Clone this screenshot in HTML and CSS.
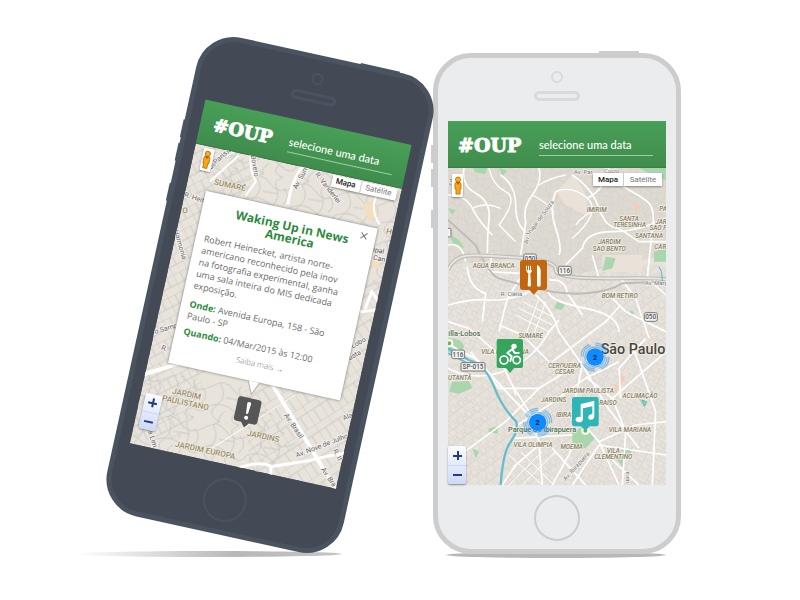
FILE: index.html
```html
<!DOCTYPE html>
<html lang="pt-BR">
<head>
<meta charset="utf-8">
<title>#OUP</title>
<link rel="stylesheet" href="styles.css">
</head>
<body>
<svg class="defs" aria-hidden="true">
  <defs>
    <symbol id="pegman" viewBox="0 0 10 20">
      <path d="M2 8Q2 6 5 6T8 8V13H7V18H3V13H2Z" fill="#f5a914" stroke="#c9780c" stroke-width="1"/>
      <circle cx="5" cy="3.500" r="2.500" fill="#f8b31c" stroke="#c9780c"/>
      <path d="M3 6H7L5 9Z" fill="#d2451e"/>
    </symbol>
    <pattern id="grid-a" width="36" height="27" patternUnits="userSpaceOnUse" patternTransform="rotate(28)">
      <path d="M0 0H36M0 14H22M22 0V27M9 14V27M31 0V14" fill="none" class="minor"/>
    </pattern>
    <pattern id="grid-b" width="30" height="38" patternUnits="userSpaceOnUse" patternTransform="rotate(-36)">
      <path d="M0 0H30M0 20H30M0 0V38M15 0V20M22 20V38M0 10H15" fill="none" class="minor"/>
    </pattern>
    <pattern id="curves" width="74" height="68" patternUnits="userSpaceOnUse" patternTransform="rotate(12)">
      <path d="M0 10Q20 0 37 12T74 10M0 42Q16 30 30 44T56 40T74 42M12 5Q22 24 10 38T18 68M18 0Q14 3 12 5M44 14Q56 28 46 42T50 68M50 0Q44 6 44 14M62 8Q74 24 64 40M30 44Q26 60 36 68M36 0Q34 4 37 12M0 58H14M50 58Q62 50 74 58M24 24H46" fill="none" class="minor"/>
    </pattern>
    <pattern id="blocks-a" width="18" height="15" patternUnits="userSpaceOnUse" patternTransform="rotate(63)">
      <path d="M0 0H18M0 8H10M0 0V15M10 0V15" fill="none" class="street"/>
    </pattern>
    <pattern id="blocks-b" width="16" height="22" patternUnits="userSpaceOnUse" patternTransform="rotate(-33)">
      <path d="M0 0H16M0 8H16M0 0V22M8 8V22" fill="none" class="street"/>
    </pattern>
    <pattern id="bends" width="46" height="42" patternUnits="userSpaceOnUse" patternTransform="rotate(10)">
      <path d="M0 8Q12 -3 22 8T46 8M8 4Q18 16 8 26T14 42M28 9Q36 20 28 30T34 42M0 28Q14 20 28 30T46 28M14 42Q10 38 18 30M36 10Q46 18 38 27M14 0Q8 2 8 4M34 0Q26 4 28 9M16 17H31" fill="none" class="street"/>
    </pattern>
  </defs>
</svg>

<main class="stage">
  <section class="phone phone-dark" aria-label="Detalhe do evento">
    <i class="key key-top"></i><i class="key key-mute"></i><i class="key key-up"></i><i class="key key-down"></i>
    <div class="bezel"><i class="camera"></i><i class="speaker"></i></div>
    <div class="screen">
      <header class="bar">
        <h1 class="logo">#OUP</h1>
        <input class="date" type="text" aria-label="Data" value="selecione uma data">
      </header>
      <div class="map">
        <svg class="tiles" viewBox="0 0 211 307" preserveAspectRatio="xMidYMid slice">
          <rect width="211" height="307" fill="#e8e4dc"/>
          <g transform="rotate(-12.4) translate(-196 -144)">
            <path d="M120 130L250 160L250 260L180 440L90 440Z" fill="url(#blocks-a)"/>
            <path d="M200 130H420V290H250Z" fill="url(#bends)"/>
            <path d="M150 372L240 385L300 440L260 480L120 460Z" fill="url(#bends)"/>
            <path d="M245 390L270 385L360 280H420V520H300L250 470Z" fill="url(#blocks-b)"/>
            <path d="M362 206L374 200L378 216L370 222Z M372 258l8 2v8h-8z" fill="#f3dfc0"/>
            <g class="roads" stroke-width="3">
              <path d="M308 160Q292 178 288 205"/>
              <path d="M140 376Q168 368 195 358" stroke-width="4"/>
              <path d="M268 378Q300 430 336 490" stroke-width="4"/>
              <path d="M356 452Q332 455 310 461L272 467Q260 460 236 470M271 467V480"/>
              <path d="M251 150Q249 170 256 182L246 196M239 156L210 182M380 190Q368 208 380 225" stroke-width="2"/>
              <path d="M365 310L372 292L382 308Q372 312 360 312"/>
              <path d="M296 395L210 450M238 150L200 174M139 380V405" stroke-width="1"/>
            </g>
            <g class="names">
              <text transform="translate(208 173) rotate(-42)">Rua Cayowaá</text>
              <text transform="translate(216 165) rotate(-42)">Paris</text>
              <text transform="translate(251 156) rotate(80)">Bovero</text>
              <text transform="translate(297 190) rotate(-62)">Av. Suma</text>
              <text transform="translate(315 175) rotate(52)">R. Vanderlei</text>
              <text transform="translate(184 197) rotate(18)">R. Heitor</text>
              <text transform="translate(174 231) rotate(74)">Harmonia</text>
              <text transform="translate(153 335) rotate(-16)">ro Samp</text>
              <text transform="translate(161 350) rotate(20)">R.</text>
              <text transform="translate(353 349) rotate(-30)">Lobo</text>
              <text transform="translate(350 361) rotate(-30)">usta</text>
              <text transform="translate(284 416) rotate(56)">Av. Brasil</text>
              <text transform="translate(297 458) rotate(-21)">Av. Nove de Julho</text>
              <text transform="translate(321 470) rotate(56)">Av. Bra</text>
              <text transform="translate(344 421) rotate(-22)">Ala</text>
              <text transform="translate(333 451) rotate(62)">R. It</text>
              <text transform="translate(148 432) rotate(72)">a Lim</text>
              <text class="poi" transform="translate(373 252) rotate(12)">ipal</text>
              <text class="poi" transform="translate(373 260) rotate(12)">Can</text>
            </g>
            <g class="areas">
              <text transform="translate(214 185) rotate(12)">SUMARÉ</text>
              <text transform="translate(172 394) rotate(12)">JARDIM</text>
              <text transform="translate(162 401) rotate(12)">PAULISTANO</text>
              <text transform="translate(247 436) rotate(12)">JARDINS</text>
              <text transform="translate(175 447) rotate(12)">JARDIM EUROPA</text>
              <text transform="translate(182 213) rotate(12)">O</text>
              <text transform="translate(386 234) rotate(12)">H</text>
            </g>
          </g>
          <g transform="translate(96 237)">
            <path d="M3 0H21Q24 0 24 3V22Q24 25 21 25H16L12 30L8 25H3Q0 25 0 22V3Q0 0 3 0Z" fill="#565656"/>
            <path d="M10 5Q12 3 14 5L13 16H11Z" fill="#fff"/><circle cx="12" cy="20" r="2" fill="#fff"/>
          </g>
        </svg>
        <button class="peg" aria-label="Street View"><svg><use href="#pegman"/></svg></button>
        <div class="types"><button class="on">Mapa</button><button>Satélite</button></div>
        <div class="zoom"><button aria-label="Aproximar"><i class="plus"></i></button><button aria-label="Afastar"><i class="minus"></i></button></div>
        <article class="popup">
          <button class="close" aria-label="Fechar"><svg viewBox="0 0 8 8"><path d="M1 1L7 7M7 1L1 7"/></svg></button>
          <h2>Waking Up in News<br>America</h2>
          <p class="about">Robert Heinecket, artista norte-<br>americano reconhecido pela inov<br>na fotografia experimental, ganha<br>uma sala inteira do MIS dedicada<br>exposição.</p>
          <p class="where"><b>Onde:</b> Avenida Europa, 158 - São<br>Paulo - SP</p>
          <p class="when"><b>Quando:</b> 04/Mar/2015 às 12:00</p>
          <a class="more" href="#">Saiba mais →</a>
          <svg class="tail" viewBox="0 0 14 14"><path d="M1 0L7 13L13 0"/></svg>
        </article>
      </div>
    </div>
    <button class="home" aria-label="Início"></button>
  </section>

  <section class="phone phone-light" aria-label="Mapa de eventos">
    <i class="key key-top"></i><i class="key key-mute"></i><i class="key key-up"></i><i class="key key-down"></i>
    <div class="bezel"><i class="camera"></i><i class="speaker"></i></div>
    <div class="screen">
      <header class="bar">
        <h1 class="logo">#OUP</h1>
        <input class="date" type="text" aria-label="Data" value="selecione uma data">
      </header>
      <div class="map">
        <svg class="tiles city" viewBox="27 9 654 951" preserveAspectRatio="xMidYMid slice">
          <rect x="0" width="700" height="970" fill="#e7e3dc"/>
          <path d="M27 0H681V270L400 330L240 280L27 300Z" fill="#dedad1"/>
          <path d="M27 0H681V270L400 330L240 280L27 300Z" fill="url(#curves)"/>
          <path d="M27 300L330 300L260 560L27 560Z" fill="url(#grid-a)"/>
          <path d="M330 300H681V560L440 620L250 560Z" fill="url(#grid-b)"/>
          <path d="M27 600L260 560L480 620L400 960H27Z" fill="url(#grid-b)"/>
          <path d="M440 620L681 540V960H400Z" fill="url(#grid-a)"/>
          <path d="M400 30Q460 90 440 150L380 120L350 80Z M490 270H610V320H490Z" fill="#eae2d8"/>
          <g fill="#a9d6ac">
            <path d="M102 9H145L138 28L110 22Z M182 9L205 18L190 34Z M600 9H681V45L640 30Z M29 205L60 225L75 250L45 240Z M500 275L530 280L520 310L490 318Z M645 260L681 250V290H645Z M355 410L378 420L368 436L345 430Z M570 435L585 440L580 455Z M27 520Q70 520 75 545L60 580L27 560Z M40 650L90 648L100 670L60 686L30 680Z M150 790L180 784L175 806L148 800Z M400 800L440 784L468 820L440 850L400 838Z M545 855L580 850L570 880Z M598 700L625 710L616 728Z M530 880L560 870L550 905Z M100 850L120 860L110 880Z M27 130L50 135L40 150Z"/>
          </g>
          <g fill="#f3cdb4"><path d="M585 115L605 122L600 136L588 130Z M345 90L360 88L358 104Z M535 630L560 635L545 665Z M525 655L540 664L530 690Z"/></g>
          <g class="roads" stroke-width="5">
            <path d="M75 9Q65 60 110 85T150 160T145 265M185 30Q230 60 230 120T260 200M300 9Q310 50 280 90T260 170L245 270M350 80Q330 130 350 190T360 270M445 100Q500 70 510 9M500 9Q540 60 570 75T625 110T640 190M400 30Q460 70 480 130T540 190L600 230M681 160Q600 200 520 200T430 250L380 300M27 90Q80 90 100 130T160 210M27 240Q70 230 80 290M600 230H681M460 270L480 340M500 380L560 440L681 500M640 190L625 340L681 390M545 340L590 400L630 520"/>
            <path d="M350 80Q400 60 445 100T400 220M150 9Q160 60 200 80T180 180L230 230M300 60Q330 40 380 30M100 130Q140 110 185 130M480 130Q430 150 410 180M280 90Q320 110 345 140" stroke-width="4"/>
            <path d="M27 420Q100 400 150 405T260 385T330 385T440 430T540 500M160 265L150 320L243 325M85 305Q90 370 140 385L130 470M243 340L205 400L180 500M330 345Q380 340 385 385L430 450M290 390Q340 430 360 500L430 600L500 720L600 850M27 470L90 490L170 560L220 660L230 690M180 480L250 510L330 590M340 590L500 470L545 420M430 600L470 560L540 560"/>
            <path d="M27 610Q100 650 190 620T330 500L360 465M220 660L270 740L300 830L310 960M95 560L180 670L300 670L430 590M220 790L330 720L440 640L540 590M300 670L200 770L50 880M430 600L400 740L480 830L540 960M480 830L590 780L681 770M440 635L520 700L681 560M520 700L560 800L550 960M220 820L400 810M300 840L230 900L190 960M620 520L540 610L545 700M580 540L650 740L640 960M400 850L340 960M340 850L440 960M480 840L400 960M480 840L681 870M520 885L600 960"/>
            <path d="M230 450L330 500M240 430L340 480M250 410L350 460M260 510L300 400M280 520L320 410" stroke-width="3"/>
            <path d="M210 870L310 960M245 860L345 960M310 860L210 960M350 860L250 960" stroke-width="3"/>
            <path d="M27 535L65 560L110 580L220 700L270 750" stroke-width="6"/>
          </g>
          <path class="rail" d="M27 165L110 240Q150 330 180 340T290 370T440 385T550 355L681 350" stroke-width="6"/>
          <path class="rail" d="M27 315Q45 275 85 272T240 278T350 315T540 340T681 355" stroke-width="12"/>
          <path d="M27 315Q45 275 85 272T240 278T350 315T540 340T681 355" fill="none" stroke="#e9e7e3" stroke-width="5"/>
          <path d="M27 550L90 585Q140 600 165 665T232 770Q238 800 215 830T185 960" fill="none" stroke="#68bccc" stroke-width="7"/>
          <path d="M27 565L80 592" fill="none" stroke="#68bccc" stroke-width="5"/>
          <path d="M660 305L668 320L670 350M610 705l12 6-6 12z" fill="none" stroke="#50b9d0" stroke-width="3"/>
          <g class="areas mid">
            <text x="473" y="142">IMIRIM</text><text x="570" y="167">SANTA</text><text x="572" y="186">TERESINHA</text>
            <text x="630" y="218">SANTANA</text><text x="511" y="238">JARDIM</text><text x="511" y="257">SAO BENTO</text>
            <text x="666" y="176">JAR</text><text x="658" y="195">SAO P</text><text x="672" y="137">PA</text><text x="664" y="253">CAR</text>
            <text x="164" y="309">AGUA BRANCA</text><text x="542" y="398">BOM RETIRO</text>
            <text x="275" y="520">SUMARÉ</text><text x="198" y="566">VILA MADALENA</text>
            <text x="377" y="609">CERQUEIRA</text><text x="377" y="627">CÉSAR</text><text x="62" y="645">UTANTÃ</text>
            <text x="447" y="684">JARDIM PAULISTA</text><text x="344" y="711">JARDINS</text><text x="603" y="698">ACLIMAÇÃO</text>
            <text x="507" y="719">RAÍSO</text><text x="374" y="757">IBIRA</text><text x="573" y="800">VILA MARIANA</text>
            <text x="282" y="846">VILA OLIMPIA</text><text x="398" y="853">MOEMA</text><text x="523" y="864">VILA</text><text x="523" y="882">CLEMENTINO</text>
          </g>
          <g class="names">
            <text transform="translate(266 237) rotate(-75)">Av. I</text>
            <text transform="translate(275 206) rotate(-53)">najar de Souza</text>
            <text x="185" y="392">R. Clélia</text><text x="617" y="359">Av. Marg</text><text x="405" y="26">Av. Par</text><text x="495" y="24">Cucio</text>
            <text transform="translate(380 948) rotate(-48)">Av. Ibirapuera</text>
            <text transform="translate(570 955) rotate(-90)">uara</text>
            <text transform="translate(42 62) rotate(-90)">Ed.</text>
            <text class="park" x="28" y="512">illa-Lobos</text>
            <text class="park" x="207" y="802">Parque do Ibirapuera</text>
            <text class="capital" x="485" y="568">São Paulo</text>
          </g>
          <g class="shields">
            <rect x="254" y="267" width="38" height="26" rx="6"/><text x="273" y="287">050</text>
            <rect x="358" y="304" width="39" height="26" rx="6"/><text x="377" y="324">116</text>
            <rect x="616" y="443" width="39" height="26" rx="6"/><text x="635" y="463">050</text>
            <rect x="38" y="555" width="39" height="26" rx="6"/><text x="57" y="575">116</text>
            <rect x="66" y="593" width="72" height="25" rx="3"/><text x="102" y="613">SP-015</text>
            <rect x="12" y="190" width="24" height="26" rx="4"/>
          </g>
          <g fill="#76b82a" stroke="#fff" stroke-width="6"><circle cx="31" cy="535" r="9"/><circle cx="439" cy="797" r="9"/></g>
          <g transform="translate(243 285)">
            <path d="M8 0H73Q81 0 81 8V82Q81 90 73 90H54L41 104L28 90H8Q0 90 0 82V8Q0 0 8 0Z" fill="#c2670f"/>
            <path d="M18 17H21V31H24V17H27V31H30V17H33V31H36V17Q38 35 31 40L33 77Q28 82 23 77L25 40Q17 36 18 17Z" fill="#fff"/>
            <path d="M51 78V19Q51 14 56 17Q64 25 62 46V78Q57 82 51 78Z" fill="#fff"/>
          </g>
          <g transform="translate(173 522)">
            <path d="M6 0H73Q79 0 79 6V81Q79 87 73 87H52L40 102L28 87H6Q0 87 0 81V6Q0 0 6 0Z" fill="#35a45c"/>
            <g fill="none" stroke="#fff" stroke-width="5" stroke-linecap="round" stroke-linejoin="round">
              <circle cx="22" cy="63" r="12"/><circle cx="60" cy="63" r="11"/>
              <path d="M47 30L32 42L45 52L41 66M47 30L54 42L66 42" stroke-width="6"/>
            </g><circle cx="52" cy="22" r="8" fill="#fff"/>
          </g>
          <g transform="translate(399 696)">
            <path d="M7 0H73Q80 0 80 7V81Q80 88 73 88H53L40 102L27 88H7Q0 88 0 81V7Q0 0 7 0Z" fill="#2fb5b5"/>
            <path d="M26 21Q45 17 67 11V56Q67 69 54 68Q45 65 51 55Q55 50 61 52V28L33 34V65Q33 76 20 76Q7 73 12 63Q18 57 26 60Z" fill="#fff"/>
          </g>
          <g class="cluster" transform="translate(468 576)">
            <circle r="42" stroke-dasharray="46 20"/><circle r="36" stroke-dasharray="43 13.500"/><circle r="30"/><circle class="dot" r="26"/><text y="8">2</text>
          </g>
          <g class="cluster" transform="translate(296 772)">
            <circle r="42" stroke-dasharray="46 20" transform="rotate(28)"/><circle r="36" stroke-dasharray="43 13.500" transform="rotate(24)"/><circle r="30"/><circle class="dot" r="26"/><text y="8">2</text>
          </g>
        </svg>
        <button class="peg" aria-label="Street View"><svg><use href="#pegman"/></svg></button>
        <div class="types"><button class="on">Mapa</button><button>Satélite</button></div>
        <div class="zoom"><button aria-label="Aproximar"><i class="plus"></i></button><button aria-label="Afastar"><i class="minus"></i></button></div>
      </div>
    </div>
    <button class="home" aria-label="Início"></button>
  </section>
</main>
</body>
</html>
```
FILE: styles.css
```css
* { box-sizing: border-box; }
body { margin: 0; background: #fff; font-family: "Open Sans", sans-serif; }
button { margin: 0; padding: 0; border: 0; background: none; font: inherit; color: inherit; }
h1, h2, p { margin: 0; }
.defs { position: absolute; width: 0; height: 0; }

.stage {
  display: flex;
  justify-content: center;
  align-items: flex-start;
  gap: 42px;
  padding: 50px 0 40px 30px;
  overflow: hidden;
}

/* Phone shell */
.phone {
  position: relative;
  flex: none;
  display: flex;
  flex-direction: column;
  align-items: center;
  width: var(--w);
  padding-bottom: 8px;
  border: 5px solid var(--edge);
  border-radius: var(--radius);
  background: var(--body);
}
.phone-light {
  --w: 248px; --edge: #cdcdcd; --body: #ebecee; --line: #d9dadb; --ring: #cdcdcd; --radius: 38px;
  --bezel: 63px; --screen: 218px; --bar: 47px; --map: 317px; --home: 46px;
  margin-top: 3px;
}
.phone-dark {
  --w: 242px; --edge: #4a5461; --body: #434a55; --line: #4a5461; --ring: #4a5461; --radius: 38px;
  --bezel: 63px; --screen: 211px; --bar: 45px; --map: 307px; --home: 44px;
  transform: rotate(12.4deg);
  z-index: 1;
}
.phone::after {
  content: "";
  position: absolute;
  z-index: -1;
}
.phone-light::after {
  left: 8px; right: 10px; bottom: -9px; height: 6px;
  border-radius: 50%;
  background: #b8b8b8;
}
.stage::before {
  content: "";
  position: absolute;
  top: 551px;
  left: 75px;
  width: 267px;
  height: 6px;
  border-radius: 50% / 50%;
  background: linear-gradient(90deg, #fff, #b8b8b8 60%, #c4c4c4);
}
.key { position: absolute; background: var(--edge); }
.key-top { top: -7px; right: 37px; width: 40px; height: 3px; }
.key-mute, .key-up, .key-down { left: -7px; width: 3px; height: 18px; }
.key-mute { top: 87px; }
.key-up { top: 111px; }
.key-down { top: 152px; }
.phone-dark .key-mute, .phone-dark .key-up, .phone-dark .key-down { left: -6px; }
.phone-dark .key-top { top: -6px; }
.bezel {
  display: flex;
  flex-direction: column;
  align-items: center;
  gap: 8px;
  height: var(--bezel);
  padding-top: 13px;
}
.camera { width: 12px; height: 12px; border: 2px solid var(--line); border-radius: 50%; }
.speaker { width: 46px; height: 10px; border: 3px solid var(--line); border-radius: 5px; }
.home {
  width: var(--home);
  height: var(--home);
  margin-top: 10px;
  border: 2px solid var(--ring);
  border-radius: 50%;
}
.phone-dark .home { margin-top: 13px; }

/* App */
.screen { width: var(--screen); }
.bar {
  display: flex;
  align-items: center;
  gap: 17px;
  height: var(--bar);
  padding: 0 13px 0 10px;
  background: linear-gradient(#489f57, #408d4d 96%, #357a41);
}
.logo {
  flex: none;
  width: 64px;
  font: bold 19px/24px "DejaVu Serif", serif;
  color: #fff;
  -webkit-text-stroke: 1px #fff;
}
.date {
  flex: 1;
  min-width: 0;
  height: 18px;
  margin-top: 4px;
  padding: 0 0 3px;
  border: 0;
  border-bottom: 1px solid #9fcca6;
  border-radius: 0;
  background: none;
  color: #fff;
  font: 500 11px/14px Lato, sans-serif;
  outline: 0;
}
.phone-dark .bar { padding-left: 14px; gap: 17px; }
.phone-dark .logo { width: 60px; font-size: 18px; }
.map { position: relative; height: var(--map); }
.tiles { display: block; width: 100%; height: 100%; overflow: hidden; }
.minor { stroke: #d2cfc7; stroke-width: 2px; }
.street { stroke: #cccac5; stroke-width: 1px; }
.roads { fill: none; stroke: #fff; stroke-linejoin: round; }
.rail { fill: none; stroke: #bfbcb6; }
.tiles text { font-family: Roboto, sans-serif; paint-order: stroke; stroke: #f4f2ee; stroke-linejoin: round; }
.names text { font-size: 7px; fill: #666; stroke-width: 2px; }
.names .poi { fill: #555; }
.areas text { font-size: 8px; font-weight: 500; fill: #9a8b60; stroke-width: 1px; }
.city .names text { font-size: 18px; fill: #777; stroke-width: 4px; }
.city .areas text { font-size: 19px; font-style: italic; fill: #887c5c; stroke-width: 4px; }
.mid text { text-anchor: middle; }
.city .names .park { font-size: 22px; font-weight: 500; fill: #4c6f50; }
.city .names .capital { font-size: 43px; font-weight: 500; fill: #4a4638; }
.shields rect { fill: #f2f2f0; stroke: #777; stroke-width: 3px; }
.shields text { font-size: 19px; font-weight: 500; fill: #555; stroke: none; text-anchor: middle; }
.cluster circle { fill: none; stroke: #2b95f0; stroke-opacity: .5; stroke-width: 4px; }
.cluster .dot { fill: #0d8bff; stroke: none; }
.cluster text { font-size: 22px; font-weight: 700; fill: #0a2440; stroke: none; text-anchor: middle; }

/* Map controls */
.peg, .types, .zoom { position: absolute; background: #fff; box-shadow: 0 1px 2px rgba(0, 0, 0, .4); }
.peg { top: 6px; left: 4px; display: grid; place-items: center; width: 11px; height: 23px; border-radius: 1px; }
.peg svg { width: 10px; height: 20px; }
.types { top: 5px; right: 4px; display: flex; font: 8px/13px Roboto, sans-serif; color: #777; }
.types button { width: 38px; }
.types .on { width: 31px; border-right: 1px solid #ccc; font-weight: 500; color: #222; }
.zoom { bottom: 1px; left: 0; width: 18px; border-radius: 2px; background: linear-gradient(#fafbff, #cddaf8); }
.zoom button { display: grid; place-items: center; width: 100%; height: 19px; }
.zoom button + button { border-top: 1px solid #cfd6ea; }
.plus, .minus { display: block; width: 9px; height: 2px; background: #223c82; }
.plus { position: relative; }
.plus::after { content: ""; position: absolute; left: 4px; top: -4px; width: 2px; height: 9px; background: #223c82; }
.phone-dark .peg { top: 2px; left: 9px; }
.phone-dark .types { top: 1px; right: 4px; line-height: 12px; }
.phone-dark .types button { width: 36px; }
.phone-dark .types .on { width: 30px; }
.phone-dark .zoom { bottom: 17px; left: 5px; width: 17px; }
.phone-dark .zoom button { height: 18px; }

/* Event popup */
.popup {
  position: absolute;
  top: 44px;
  left: 20px;
  width: 176px;
  min-height: 176px;
  padding: 11px 0 0 9px;
  background: #fff;
  box-shadow: 0 0 3px rgba(0, 0, 0, .5);
  color: #6b6b6b;
  font-size: 9px;
  line-height: 12px;
}
.popup h2 { margin-bottom: 6px; font-size: 12px; line-height: 12px; text-align: center; color: #2d8a3c; }
.popup p { white-space: nowrap; }
.popup b { color: #2d8a3c; }
.popup .where { margin-top: 7px; }
.popup .when { margin-top: 4px; }
.more { display: block; margin-top: 5px; padding-right: 4px; font-size: 8px; font-weight: 300; line-height: 10px; text-align: center; color: #777; text-decoration: none; }
.close { position: absolute; top: 5px; right: 7px; width: 9px; height: 9px; }
.close svg { display: block; width: 8px; height: 8px; fill: none; stroke: #777; stroke-width: 1px; }
.tail { position: absolute; top: 100%; left: 81px; width: 14px; height: 14px; fill: #fff; stroke: #b5b2ac; stroke-width: 1px; }
```
